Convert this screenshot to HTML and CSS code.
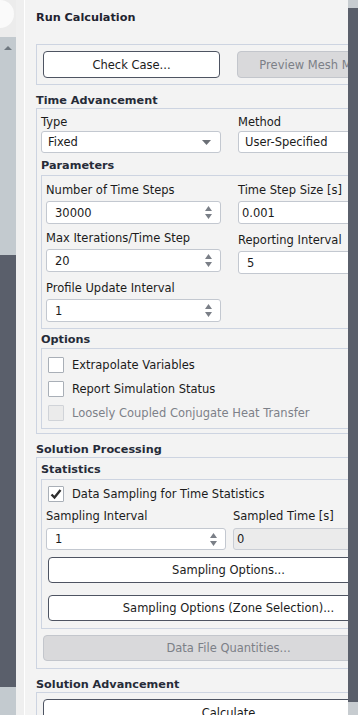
FILE: index.html
```html
<!DOCTYPE html>
<html lang="en">

<head>
    <meta charset="UTF-8">
    <meta name="viewport" content="width=device-width, initial-scale=1.0">
    <title>Run Calculation</title>
    <link rel="stylesheet" href="styles.css">
</head>

<body>
    <div class="app">
        <div class="rail">
            <div class="rail-top"><span class="orb"></span></div>
            <div class="rail-track"><span class="rail-up"></span></div>
            <div class="rail-thumb"></div>
            <div class="rail-end"></div>
        </div>
        <div class="gutter"></div>

        <div class="panel">
            <div class="sheet">
                <h1 class="title">Run Calculation</h1>
                <div class="group run-row">
                    <button type="button" class="btn half">Check Case...</button>
                    <button type="button" class="btn half" disabled>Preview Mesh Motion...</button>
                </div>

                <h2 class="heading">Time Advancement</h2>
                <div class="group section">
                    <div class="pair top-pair">
                        <div class="field">
                            <label>Type</label>
                            <div class="select">
                                <span>Fixed</span>
                                <svg width="9" height="5" viewBox="0 0 9 5"><path d="M0 0 L9 0 L4.5 5 Z" fill="#6b6f76"/></svg>
                            </div>
                        </div>
                        <div class="field">
                            <label>Method</label>
                            <div class="select"><span>User-Specified</span></div>
                        </div>
                    </div>

                    <h3 class="sub-heading">Parameters</h3>
                    <div class="group inner params">
                        <div class="field">
                            <label>Number of Time Steps</label>
                            <div class="input">
                                <span class="value pad8">30000</span>
                                <svg class="spin" width="7" height="13" viewBox="0 0 7 13"><path d="M0 5 L3.5 0 L7 5 Z M0 8 L7 8 L3.5 13 Z" fill="#7a7f87"/></svg>
                            </div>
                        </div>
                        <div class="field">
                            <label>Time Step Size [s]</label>
                            <div class="input"><span class="value pad3">0.001</span></div>
                        </div>
                        <div class="field">
                            <label>Max Iterations/Time Step</label>
                            <div class="input">
                                <span class="value pad8">20</span>
                                <svg class="spin" width="7" height="13" viewBox="0 0 7 13"><path d="M0 5 L3.5 0 L7 5 Z M0 8 L7 8 L3.5 13 Z" fill="#7a7f87"/></svg>
                            </div>
                        </div>
                        <div class="field lower">
                            <label>Reporting Interval</label>
                            <div class="input"><span class="value pad8">5</span></div>
                        </div>
                        <div class="field">
                            <label>Profile Update Interval</label>
                            <div class="input">
                                <span class="value pad8">1</span>
                                <svg class="spin" width="7" height="13" viewBox="0 0 7 13"><path d="M0 5 L3.5 0 L7 5 Z M0 8 L7 8 L3.5 13 Z" fill="#7a7f87"/></svg>
                            </div>
                        </div>
                    </div>

                    <h3 class="sub-heading options-head">Options</h3>
                    <div class="group inner options">
                        <div class="check-row"><span class="box"></span>Extrapolate Variables</div>
                        <div class="check-row"><span class="box"></span>Report Simulation Status</div>
                        <div class="check-row off"><span class="box"></span>Loosely Coupled Conjugate Heat Transfer</div>
                    </div>
                </div>

                <h2 class="heading">Solution Processing</h2>
                <div class="group section processing">
                    <h3 class="sub-heading stats-head">Statistics</h3>
                    <div class="group inner stats">
                        <div class="check-row">
                            <span class="box">
                                <svg width="14" height="14" viewBox="0 0 14 14"><path d="M2.5 7.5 L5.5 10.5 L11.5 3" fill="none" stroke="#2e2e2e" stroke-width="2.4"/></svg>
                            </span>Data Sampling for Time Statistics
                        </div>
                        <div class="pair stats-pair">
                            <div class="field">
                                <label>Sampling Interval</label>
                                <div class="input">
                                    <span class="value pad8">1</span>
                                    <svg class="spin" width="7" height="13" viewBox="0 0 7 13"><path d="M0 5 L3.5 0 L7 5 Z M0 8 L7 8 L3.5 13 Z" fill="#7a7f87"/></svg>
                                </div>
                            </div>
                            <div class="field">
                                <label>Sampled Time [s]</label>
                                <div class="input off"><span class="value pad3">0</span></div>
                            </div>
                        </div>
                        <button type="button" class="btn wide first">Sampling Options...</button>
                        <button type="button" class="btn wide second">Sampling Options (Zone Selection)...</button>
                    </div>
                    <button type="button" class="btn wide data" disabled>Data File Quantities...</button>
                </div>

                <h2 class="heading">Solution Advancement</h2>
                <div class="group run-row">
                    <button type="button" class="btn full">Calculate</button>
                </div>
            </div>
        </div>

        <div class="vscroll"><div class="vscroll-thumb"></div></div>
    </div>
</body>

</html>
```

FILE: styles.css
```css
* {
    box-sizing: border-box;
}

body {
    margin: 0;
    width: 358px;
    height: 715px;
    overflow: hidden;
    background-color: #efefef;
    font-family: "DejaVu Sans", Verdana, sans-serif;
    font-size: 11.5px;
    color: #1b1b1b;
}

.app {
    display: flex;
    height: 715px;
}

/* left dock strip */
.rail {
    width: 16px;
    flex: none;
    display: flex;
    flex-direction: column;
}

.rail-top {
    height: 37px;
    background-color: #ececec;
}

.orb {
    display: block;
    width: 14px;
    height: 28px;
    background-color: #fafafa;
    border-radius: 0 14px 14px 0;
}

.rail-track {
    height: 218px;
    padding-top: 9px;
    background-color: #c3cacf;
    display: flex;
    justify-content: center;
}

.rail-up {
    width: 0;
    height: 0;
    border-left: 4px solid transparent;
    border-right: 4px solid transparent;
    border-bottom: 4px solid #6f7880;
}

.rail-thumb {
    height: 432px;
    background-color: #5a5f6b;
}

.rail-end {
    flex: 1;
    background-color: #c3cacf;
}

.gutter {
    width: 9px;
    flex: none;
    background-color: #efefef;
    border-right: 1px solid #ffffff;
}

/* task page */
.panel {
    flex: 1;
    overflow: hidden;
    background-color: #f3f3f3;
    padding-left: 11px;
}

.sheet {
    width: 385px;
}

.title {
    margin: 0;
    height: 44px;
    padding-top: 11px;
    font-size: 11.25px;
    line-height: 14px;
    font-weight: bold;
    color: #1f2330;
}

.heading {
    margin: 0;
    padding-top: 9px;
    font-size: 11.25px;
    line-height: 14px;
    font-weight: bold;
    color: #262b38;
}

.sub-heading {
    margin: 0;
    padding: 6px 0 2px;
    font-size: 11.25px;
    line-height: 14px;
    font-weight: bold;
    color: #262b38;
}

.options-head {
    padding: 4px 0 1px;
}

.stats-head {
    padding: 0 0 2px;
}

.group {
    border: 1px solid #cdd4e1;
}

.run-row {
    display: flex;
    gap: 17px;
    padding: 6px;
}

.section {
    padding: 6px 4px 4px;
}

.processing {
    padding: 5px 4px 7px;
}

.btn {
    height: 27px;
    padding: 0;
    background-color: #ffffff;
    border: 1px solid #4e5462;
    border-radius: 4px;
    font: inherit;
    color: #1b1b1b;
    white-space: nowrap;
    overflow: hidden;
}

.btn:disabled {
    background-color: #d9d9db;
    border-color: #c3c6cc;
    color: #7c8087;
}

.half {
    width: 177px;
}

.full {
    width: 100%;
}

.wide {
    display: block;
    width: calc(100% - 4px);
    height: 26px;
    margin: 0 2px;
}

.wide.first {
    margin-top: 7px;
}

.wide.second {
    margin-top: 12px;
}

.wide.data {
    margin-top: 6px;
}

/* fields */
.pair {
    display: grid;
    grid-template-columns: 180px 178px;
    column-gap: 17px;
}

.stats-pair {
    margin-top: 3px;
    column-gap: 7px;
}

.field label {
    display: block;
    line-height: 14px;
    margin-bottom: 4px;
    white-space: nowrap;
}

.top-pair label {
    margin-bottom: 2px;
}

.stats-pair label {
    margin-bottom: 5px;
}

.select,
.input {
    display: flex;
    align-items: center;
    justify-content: space-between;
    background-color: #ffffff;
    border: 1px solid #c3c8d0;
    border-radius: 3px;
    white-space: nowrap;
}

.select {
    height: 22px;
    padding: 0 9px 0 6px;
}

.input {
    height: 23px;
    padding-right: 8px;
}

.stats .input {
    height: 22px;
}

.input.off {
    background-color: #ebebeb;
    border-color: #c9cdd4;
}

.pad8 {
    padding-left: 8px;
}

.pad3 {
    padding-left: 3px;
}

.params {
    display: grid;
    grid-template-columns: 175px 173px;
    align-items: start;
    column-gap: 17px;
    row-gap: 7px;
    padding: 7px 4px 6px;
}

.params .lower {
    padding-top: 2px;
}

/* check boxes */
.options {
    padding: 4px 6px 3px;
}

.stats {
    padding: 2px 4px 7px;
}

.stats .check-row {
    padding-left: 2px;
}

.check-row {
    display: flex;
    align-items: center;
    gap: 8px;
    height: 24px;
    white-space: nowrap;
}

.box {
    width: 16px;
    height: 16px;
    flex: none;
    display: flex;
    align-items: center;
    justify-content: center;
    background-color: #ffffff;
    border: 1px solid #a9afb7;
    border-radius: 1px;
}

.check-row.off {
    color: #7d8189;
}

.check-row.off .box {
    background-color: #ebebeb;
    border-color: #d0d3d8;
}

/* right scroll bar */
.vscroll {
    width: 10px;
    flex: none;
    background-color: #c7ccd0;
}

.vscroll-thumb {
    margin-top: 8px;
    height: 694px;
    background-color: #5a5f6b;
}
```
